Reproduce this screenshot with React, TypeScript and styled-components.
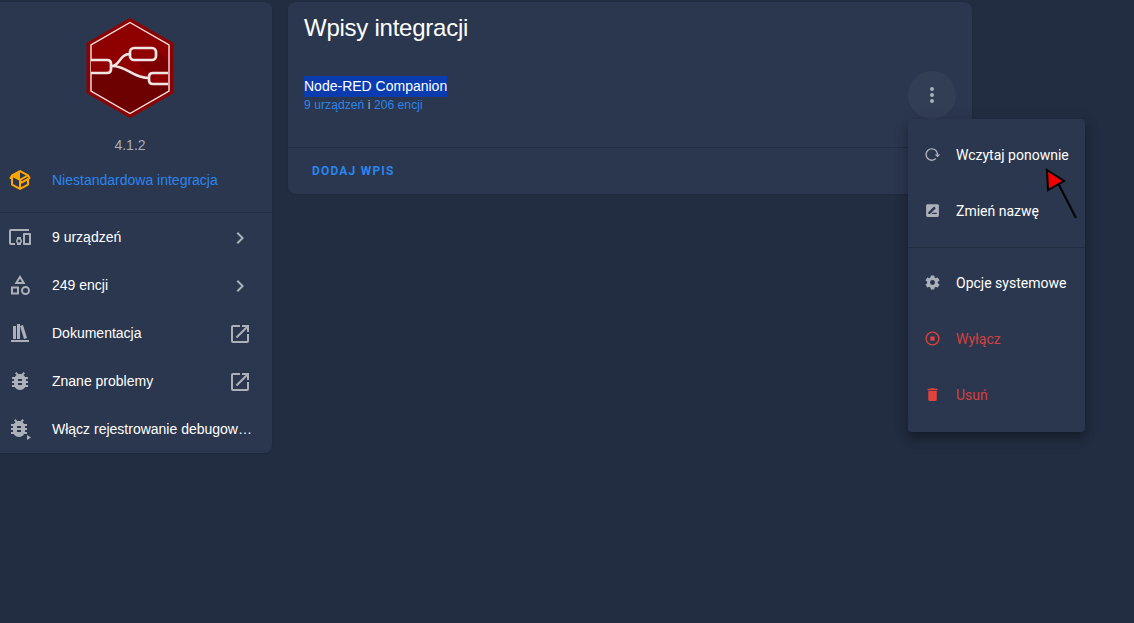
import { createGlobalStyle, styled } from "styled-components";

const GlobalStyle = createGlobalStyle`
  html, body {
    margin: 0;
    height: 100%;
    overflow: hidden;
    background: #222d41;
    color: #fff;
    font-family: "Liberation Sans", Arial, sans-serif;
  }
`;

const mdi = {
  packageVariant:
    "M2,10.96C1.5,10.68 1.35,10.07 1.63,9.59L3.13,7C3.24,6.8 3.41,6.66 3.6,6.58L11.43,2.18C11.59,2.06 11.79,2 12,2C12.21,2 12.41,2.06 12.57,2.18L20.47,6.62C20.66,6.72 20.82,6.88 20.91,7.08L22.36,9.6C22.64,10.08 22.47,10.69 22,10.96L21,11.54V16.5C21,16.88 20.79,17.21 20.47,17.38L12.57,21.82C12.41,21.94 12.21,22 12,22C11.79,22 11.59,21.94 11.43,21.82L3.53,17.38C3.21,17.21 3,16.88 3,16.5V10.96C2.7,11.13 2.32,11.14 2,10.96M12,4.15V4.15L12,10.85V10.85L17.96,7.5L12,4.15M5,15.91L11,19.29V12.58L5,9.21V15.91M19,15.91V12.69L14,15.59C13.67,15.77 13.3,15.76 13,15.6V19.29L19,15.91M13.85,13.36L20.13,9.73L19.55,8.72L13.27,12.35L13.85,13.36Z",
  devices:
    "M3 6H21V4H3C1.9 4 1 4.9 1 6V18C1 19.1 1.9 20 3 20H7V18H3V6M13 12H9V13.78C8.39 14.33 8 15.11 8 16C8 16.89 8.39 17.67 9 18.22V20H13V18.22C13.61 17.67 14 16.88 14 16S13.61 14.33 13 13.78V12M11 17.5C10.17 17.5 9.5 16.83 9.5 16S10.17 14.5 11 14.5 12.5 15.17 12.5 16 11.83 17.5 11 17.5M22 8H16C15.5 8 15 8.5 15 9V19C15 19.5 15.5 20 16 20H22C22.5 20 23 19.5 23 19V9C23 8.5 22.5 8 22 8M21 18H17V10H21V18Z",
  shape:
    "M11,13.5V21.5H3V13.5H11M9,15.5H5V19.5H9V15.5M12,2L17.5,11H6.5L12,2M12,5.86L10.08,9H13.92L12,5.86M17.5,13C20,13 22,15 22,17.5C22,20 20,22 17.5,22C15,22 13,20 13,17.5C13,15 15,13 17.5,13M17.5,15A2.5,2.5 0 0,0 15,17.5A2.5,2.5 0 0,0 17.5,20A2.5,2.5 0 0,0 20,17.5A2.5,2.5 0 0,0 17.5,15Z",
  bookshelf: "M9 3V18H12V3H9M12 5L16 18L19 17L15 4L12 5M5 5V18H8V5H5M3 19V21H21V19H3Z",
  bug:
    "M14,12H10V10H14M14,16H10V14H14M20,8H17.19C16.74,7.22 16.12,6.55 15.37,6.04L17,4.41L15.59,3L13.42,5.17C12.96,5.06 12.5,5 12,5C11.5,5 11.04,5.06 10.59,5.17L8.41,3L7,4.41L8.62,6.04C7.88,6.55 7.26,7.22 6.81,8H4V10H6.09C6.04,10.33 6,10.66 6,11V12H4V14H6V15C6,15.34 6.04,15.67 6.09,16H4V18H6.81C7.85,19.79 9.78,21 12,21C14.22,21 16.15,19.79 17.19,18H20V16H17.91C17.96,15.67 18,15.34 18,15V14H20V12H18V11C18,10.66 17.96,10.33 17.91,10H20V8Z",
  bugPlay:
    "M13,11H9V9H13M13,15H9V13H13M19,7H16.19C15.74,6.22 15.12,5.55 14.37,5.04L16,3.41L14.59,2L12.42,4.17C11.96,4.06 11.5,4 11,4C10.5,4 10.04,4.06 9.59,4.17L7.41,2L6,3.41L7.62,5.04C6.88,5.55 6.26,6.22 5.81,7H3V9H5.09C5.04,9.33 5,9.66 5,10V11H3V13H5V14C5,14.34 5.04,14.67 5.09,15H3V17H5.81C6.85,18.79 8.78,20 11,20C13.22,20 15.15,18.79 16.19,17H19V15H16.91C16.96,14.67 17,14.34 17,14V13H19V11H17V10C17,9.66 16.96,9.33 16.91,9H19V7ZM19,18V23L23,20.5Z",
  openInNew:
    "M14,3V5H17.59L7.76,14.83L9.17,16.24L19,6.41V10H21V3M19,19H5V5H12V3H5C3.89,3 3,3.9 3,5V19A2,2 0 0,0 5,21H19A2,2 0 0,0 21,19V12H19V19Z",
  chevronRight: "M8.59,16.58L13.17,12L8.59,7.41L10,6L16,12L10,18L8.59,16.58Z",
  dotsVertical:
    "M12,16A2,2 0 0,1 14,18A2,2 0 0,1 12,20A2,2 0 0,1 10,18A2,2 0 0,1 12,16M12,10A2,2 0 0,1 14,12A2,2 0 0,1 12,14A2,2 0 0,1 10,12A2,2 0 0,1 12,10M12,4A2,2 0 0,1 14,6A2,2 0 0,1 12,8A2,2 0 0,1 10,6A2,2 0 0,1 12,4Z",
  reload:
    "M2 12C2 16.97 6.03 21 11 21C13.39 21 15.68 20.06 17.4 18.4L15.9 16.9C14.63 18.25 12.86 19 11 19C4.76 19 1.64 11.46 6.05 7.05C10.46 2.64 18 5.77 18 12H15L19 16H19.1L23 12H20C20 7.03 15.97 3 11 3C6.03 3 2 7.03 2 12Z",
  renameBox:
    "M18,17H10.5L12.5,15H18M6,17V14.5L13.88,6.65C14.07,6.45 14.39,6.45 14.59,6.65L16.35,8.41C16.55,8.61 16.55,8.92 16.35,9.12L8.47,17M19,3H5C3.89,3 3,3.89 3,5V19A2,2 0 0,0 5,21H19A2,2 0 0,0 21,19V5C21,3.89 20.1,3 19,3Z",
  cog:
    "M12,15.5A3.5,3.5 0 0,1 8.5,12A3.5,3.5 0 0,1 12,8.5A3.5,3.5 0 0,1 15.5,12A3.5,3.5 0 0,1 12,15.5M19.43,12.97C19.47,12.65 19.5,12.33 19.5,12C19.5,11.67 19.47,11.34 19.43,11L21.54,9.37C21.73,9.22 21.78,8.95 21.66,8.73L19.66,5.27C19.54,5.05 19.27,4.96 19.05,5.05L16.56,6.05C16.04,5.66 15.5,5.32 14.87,5.07L14.5,2.42C14.46,2.18 14.25,2 14,2H10C9.75,2 9.54,2.18 9.5,2.42L9.13,5.07C8.5,5.32 7.96,5.66 7.44,6.05L4.95,5.05C4.73,4.96 4.46,5.05 4.34,5.27L2.34,8.73C2.21,8.95 2.27,9.22 2.46,9.37L4.57,11C4.53,11.34 4.5,11.67 4.5,12C4.5,12.33 4.53,12.65 4.57,12.97L2.46,14.63C2.27,14.78 2.21,15.05 2.34,15.27L4.34,18.73C4.46,18.95 4.73,19.03 4.95,18.95L7.44,17.94C7.96,18.34 8.5,18.68 9.13,18.93L9.5,21.58C9.54,21.82 9.75,22 10,22H14C14.25,22 14.46,21.82 14.5,21.58L14.87,18.93C15.5,18.67 16.04,18.34 16.56,17.94L19.05,18.95C19.27,19.03 19.54,18.95 19.66,18.73L21.66,15.27C21.78,15.05 21.73,14.78 21.54,14.63L19.43,12.97Z",
  stopCircle:
    "M12,2A10,10 0 0,0 2,12A10,10 0 0,0 12,22A10,10 0 0,0 22,12A10,10 0 0,0 12,2M12,4C16.41,4 20,7.59 20,12C20,16.41 16.41,20 12,20C7.59,20 4,16.41 4,12C4,7.59 7.59,4 12,4M9,9V15H15V9Z",
  trash: "M19,4H15.5L14.5,3H9.5L8.5,4H5V6H19M6,19A2,2 0 0,0 8,21H16A2,2 0 0,0 18,19V7H6V19Z",
};

const Page = styled.div`
  display: flex;
  align-items: flex-start;
  gap: 16px;
  padding-top: 2px;
  height: 621px;
  position: relative;
  overflow: hidden;
`;

const Card = styled.section`
  background: #2b374e;
  border-radius: 8px;
  box-shadow: 0 1px 2px rgba(0, 0, 0, 0.12);
`;

const InfoCard = styled(Card)`
  width: 284px;
  margin-left: -12px;
  flex: none;
`;

const InfoHead = styled.div`
  padding: 15px 0 7px;
  border-bottom: 1px solid #232e42;
  display: flex;
  flex-direction: column;
`;

const Logo = styled.svg`
  display: block;
  align-self: center;
  width: 88px;
  height: 101px;
`;

const Version = styled.div`
  margin-top: 17px;
  height: 20px;
  line-height: 20px;
  text-align: center;
  font-size: 14px;
  color: #a9aeb7;
`;

const Row = styled.div`
  display: flex;
  align-items: center;
  gap: 20px;
  height: 48px;
  padding: 0 20px;
  font-size: 14px;
`;

const CustomRow = styled(Row)`
  height: 50px;
  color: #2a85ee;
`;

const RowText = styled.span`
  flex: 1;
  min-width: 0;
  white-space: nowrap;
  overflow: hidden;
  text-overflow: ellipsis;
`;

const RowEnd = styled.span`
  margin-top: 2px;
`;

const Glyph = styled.svg<{ $size?: number; $tone?: string }>`
  display: block;
  flex: none;
  width: ${(p) => p.$size ?? 24}px;
  height: ${(p) => p.$size ?? 24}px;
  fill: ${(p) => p.$tone ?? "#acb0b8"};
`;

const Icon = ({ d, size, tone }: { d: string; size?: number; tone?: string }) => (
  <Glyph viewBox="0 0 24 24" $size={size} $tone={tone}>
    <path d={d} />
  </Glyph>
);

const EntriesCard = styled(Card)`
  width: 684px;
  flex: none;
`;

const Title = styled.h1`
  margin: 0;
  padding: 10px 16px 0;
  font-size: 24px;
  font-weight: 400;
  letter-spacing: -0.25px;
  line-height: 32px;
`;

const EntryRow = styled.div`
  display: flex;
  align-items: center;
  justify-content: space-between;
  height: 103px;
  padding: 0 16px;
  border-bottom: 1px solid #232e42;
`;

const EntryText = styled.div`
  margin-top: -2px;
`;

const EntryName = styled.div`
  font-size: 14px;
  height: 21px;
  line-height: 21px;
`;

const Selected = styled.span`
  display: inline-block;
  background: #0a3cb0;
`;

const EntryLinks = styled.div`
  font-size: 12px;
  letter-spacing: 0.09px;
  line-height: 16px;
  color: #a9aeb7;
`;

const LinkText = styled.span`
  color: #2a85ee;
`;

const KebabWrap = styled.div`
  position: relative;
  width: 48px;
  height: 48px;
  margin-top: -2px;
`;

const Kebab = styled.div`
  width: 48px;
  height: 48px;
  border-radius: 50%;
  background: #323e54;
  display: flex;
  align-items: center;
  justify-content: center;
`;

const Actions = styled.div`
  height: 46px;
  display: flex;
  align-items: center;
  padding-left: 24px;
`;

const AddButton = styled.span`
  font-family: Roboto, sans-serif;
  font-size: 12px;
  font-weight: 700;
  letter-spacing: 1.2px;
  color: #2a85ee;
`;

const Menu = styled.div`
  position: absolute;
  top: 48px;
  left: 0;
  width: 177px;
  padding: 8px 0 9px;
  box-sizing: border-box;
  background: #2b374e;
  border-radius: 4px;
  box-shadow: 0 5px 5px -3px rgba(0, 0, 0, 0.2), 0 8px 10px 1px rgba(0, 0, 0, 0.14),
    0 3px 14px 2px rgba(0, 0, 0, 0.12);
  font-family: Roboto, sans-serif;
  z-index: 2;
`;

const MenuItem = styled.div<{ $danger?: boolean }>`
  height: 56px;
  display: flex;
  align-items: center;
  gap: 16px;
  padding-left: 16px;
  font-size: 14px;
  font-weight: 400;
  white-space: nowrap;
  color: ${(p) => (p.$danger ? "#d63f3e" : "#fff")};
`;

const MenuIconSlot = styled.span`
  width: 16px;
  display: flex;
  justify-content: center;
`;

const MenuDivider = styled.div`
  height: 1px;
  margin: 8px 0 7px;
  background: #232e42;
`;

const Pointer = styled.svg`
  position: absolute;
  left: 1040px;
  top: 164px;
  width: 42px;
  height: 58px;
  z-index: 3;
`;

const rows = [
  { icon: mdi.devices, label: "9 urządzeń", end: mdi.chevronRight },
  { icon: mdi.shape, label: "249 encji", end: mdi.chevronRight },
  { icon: mdi.bookshelf, label: "Dokumentacja", end: mdi.openInNew },
  { icon: mdi.bug, label: "Znane problemy", end: mdi.openInNew },
  { icon: mdi.bugPlay, label: "Włącz rejestrowanie debugowania" },
];

const menuItems = [
  { icon: mdi.reload, label: "Wczytaj ponownie" },
  { icon: mdi.renameBox, label: "Zmień nazwę" },
  { divider: true, icon: mdi.cog, label: "Opcje systemowe" },
  { icon: mdi.stopCircle, label: "Wyłącz", danger: true },
  { icon: mdi.trash, label: "Usuń", danger: true },
];

const NodeRedLogo = () => (
  <Logo viewBox="86 17 88 101">
    <polygon points="130,18 173.5,43 173.5,93 130,118 86.5,93 86.5,43" fill="#8f0000" />
    <path
      d="M91,73 L112,73 L114,66 C128,66 132,78 148,78 L148,84 L168,84 L169,91 L130,113.5 L91,91 Z"
      fill="#6d0000"
    />
    <path d="M157,50 L169,62 L169,72 L150,72 C143,71 140,66 137,60 L157,60 Z" fill="#7c0000" />
    <polygon
      points="130,22.5 169,45 169,91 130,113.5 91,91 91,45"
      fill="none"
      stroke="#f1e6e6"
      strokeWidth="1.4"
    />
    <g fill="#8f0000" stroke="#f1e6e6" strokeWidth="2.7">
      <path d="M91,60 H107 Q111,60 111,64 V69 Q111,73 107,73 H91" />
      <rect x="130" y="48" width="26" height="12" rx="4" />
      <path d="M168,73 H153 Q149,73 149,77 V80 Q149,84 153,84 H168" />
    </g>
    <path
      d="M112,66 C120,66 119,54 130,54 M112,66 C128,66 132,78 149,78"
      fill="none"
      stroke="#f1e6e6"
      strokeWidth="2.5"
    />
  </Logo>
);

const App = () => (
  <>
    <GlobalStyle />
    <Page>
      <InfoCard>
        <InfoHead>
          <NodeRedLogo />
          <Version>4.1.2</Version>
          <CustomRow>
            <Icon d={mdi.packageVariant} tone="#ffa600" />
            <RowText>Niestandardowa integracja</RowText>
          </CustomRow>
        </InfoHead>
        {rows.map((row) => (
          <Row key={row.label}>
            <Icon d={row.icon} />
            <RowText>{row.label}</RowText>
            {row.end && (
              <RowEnd>
                <Icon d={row.end} />
              </RowEnd>
            )}
          </Row>
        ))}
      </InfoCard>
      <EntriesCard>
        <Title>Wpisy integracji</Title>
        <EntryRow>
          <EntryText>
            <EntryName>
              <Selected>Node-RED Companion</Selected>
            </EntryName>
            <EntryLinks>
              <LinkText>9 urządzeń</LinkText> i <LinkText>206 encji</LinkText>
            </EntryLinks>
          </EntryText>
          <KebabWrap>
            <Kebab>
              <Icon d={mdi.dotsVertical} />
            </Kebab>
            <Menu>
              {menuItems.map((item) => (
                <div key={item.label}>
                  {item.divider && <MenuDivider />}
                  <MenuItem $danger={item.danger}>
                    <MenuIconSlot>
                      <Icon d={item.icon} size={17} tone={item.danger ? "#e0433d" : undefined} />
                    </MenuIconSlot>
                    <span>{item.label}</span>
                  </MenuItem>
                </div>
              ))}
            </Menu>
          </KebabWrap>
        </EntryRow>
        <Actions>
          <AddButton>DODAJ WPIS</AddButton>
        </Actions>
      </EntriesCard>
      <Pointer viewBox="1040 164 42 58">
        <line x1="1058" y1="183" x2="1076" y2="218" stroke="#000" strokeWidth="2" />
        <polygon points="1047,170 1064,181 1048,190" fill="#f00000" stroke="#000" strokeWidth="2" />
      </Pointer>
    </Page>
  </>
);

export default App;
